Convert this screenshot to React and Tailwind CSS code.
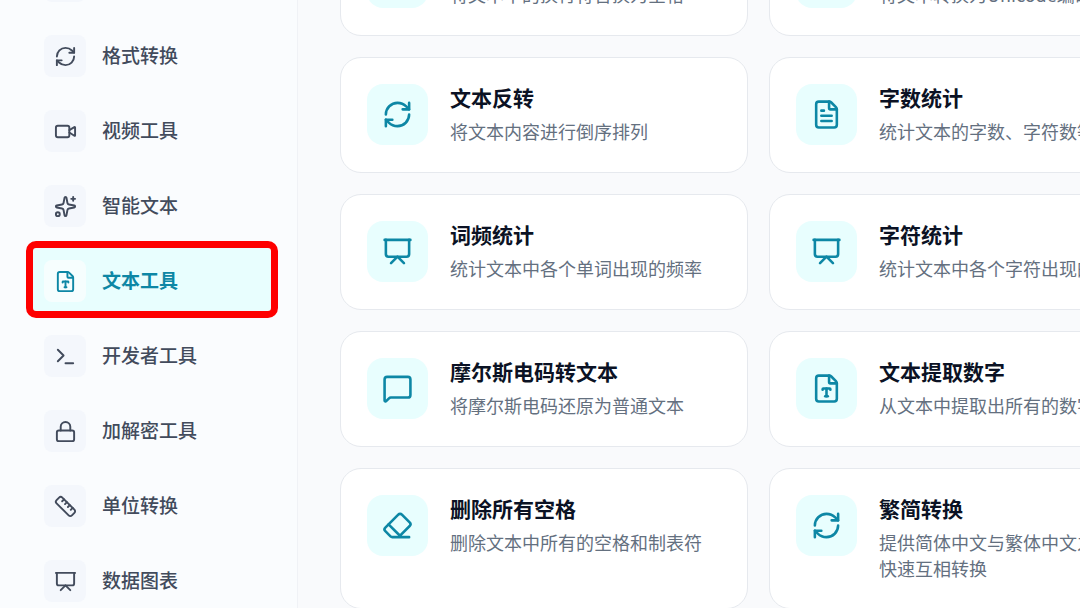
import {
  Eraser,
  FileText,
  FileType,
  Image,
  Lock,
  MessageSquare,
  Presentation,
  RefreshCw,
  Ruler,
  Sparkles,
  Terminal,
  Video,
  WrapText,
  Code,
} from "lucide-react";

const categories = [
  { name: "图片工具", icon: Image },
  { name: "格式转换", icon: RefreshCw },
  { name: "视频工具", icon: Video },
  { name: "智能文本", icon: Sparkles },
  { name: "文本工具", icon: FileType, active: true },
  { name: "开发者工具", icon: Terminal },
  { name: "加解密工具", icon: Lock },
  { name: "单位转换", icon: Ruler },
  { name: "数据图表", icon: Presentation },
];

const tools = [
  { title: "换行转空格", text: "将文本中的换行符替换为空格", icon: WrapText },
  { title: "文本转Unicode", text: "将文本转换为Unicode编码", icon: Code },
  { title: "文本反转", text: "将文本内容进行倒序排列", icon: RefreshCw },
  { title: "字数统计", text: "统计文本的字数、字符数等", icon: FileText },
  { title: "词频统计", text: "统计文本中各个单词出现的频率", icon: Presentation },
  { title: "字符统计", text: "统计文本中各个字符出现的频率", icon: Presentation },
  { title: "摩尔斯电码转文本", text: "将摩尔斯电码还原为普通文本", icon: MessageSquare },
  { title: "文本提取数字", text: "从文本中提取出所有的数字", icon: FileType },
  { title: "删除所有空格", text: "删除文本中所有的空格和制表符", icon: Eraser },
  {
    title: "繁简转换",
    text: "提供简体中文与繁体中文之间的",
    tail: "快速互相转换",
    icon: RefreshCw,
  },
];

function CategoryLink({ name, icon: Icon, active }) {
  return (
    <a
      href="#"
      aria-current={active ? "page" : undefined}
      className={
        "relative flex h-[70px] items-center gap-4 rounded-xl px-3.5 text-[19px] " +
        (active ? "bg-[#e8fefe] font-bold text-[#0d87a5]" : "font-medium text-[#424b5c]")
      }
    >
      <span
        className={
          "flex size-[42px] shrink-0 items-center justify-center rounded-lg " +
          (active ? "bg-[#f6fefe]" : "bg-[#f4f7fc]")
        }
      >
        <Icon size={23} />
      </span>
      <span className="pb-0.5">{name}</span>
      {active && (
        <span className="pointer-events-none absolute -top-[5px] -right-[5px] -bottom-0.5 -left-1 rounded-[10px] border-[7px] border-[#fe0000]" />
      )}
    </a>
  );
}

function ToolCard({ title, text, tail, icon: Icon }) {
  return (
    <a
      href="#"
      className="flex items-start gap-[22px] rounded-[21px] border border-[#e6e9ee] bg-white px-[26px] pt-[26px] pb-[27px]"
    >
      <span className="flex size-[61px] shrink-0 items-center justify-center rounded-2xl bg-[#e8fefe] text-[#0d87a5]">
        <Icon size={31} />
      </span>
      <div className="min-w-0">
        <h3 className="text-[21px] leading-[26px] font-bold text-[#0b1224]">{title}</h3>
        <p className="mt-2 text-[18px] leading-[26px] text-[#64707f]">
          {text}
          {tail && <span className="inline-block">{tail}</span>}
        </p>
      </div>
    </a>
  );
}

export default function App() {
  return (
    <div className="flex h-screen overflow-hidden bg-[#f9fafc] font-['Noto_Sans_CJK_SC',sans-serif]">
      <aside className="w-[298px] shrink-0 overflow-hidden border-r border-[#f0f2f6] bg-[#fafcfe]">
        <nav className="-mt-[54px] flex flex-col gap-[5px] pr-6 pl-[30px]">
          {categories.map((c) => (
            <CategoryLink key={c.name} {...c} />
          ))}
        </nav>
      </aside>
      <main className="min-w-0 flex-1 overflow-hidden pl-[42px]">
        <div className="-mt-20 grid grid-cols-[repeat(2,minmax(408px,1fr))] gap-[21px]">
          {tools.map((t) => (
            <ToolCard key={t.title} {...t} />
          ))}
        </div>
      </main>
    </div>
  );
}
